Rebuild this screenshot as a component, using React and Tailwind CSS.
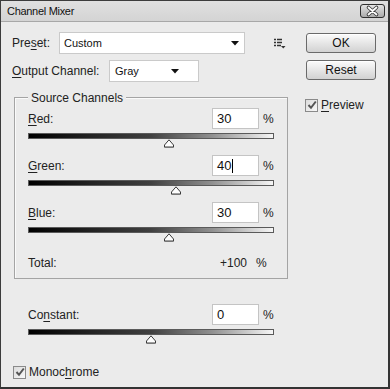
import React from "react"

const font = { fontFamily: '"Liberation Sans", Arial, sans-serif' }

// slider range is -200..200
const toPct = (v) => ((v + 200) / 400) * 100

function U({ children }) {
  return <span className="underline underline-offset-2 decoration-1">{children}</span>
}

function DropArrow() {
  return (
    <svg width="8" height="5" viewBox="0 0 8 5">
      <path d="M0 0 H8 L4 4.5 Z" fill="#111" />
    </svg>
  )
}

function Thumb() {
  return (
    <svg width="11" height="9" viewBox="0 0 11 9">
      <path d="M5.5 0.8 L10 6 V8.2 H1 V6 Z" fill="#fdfdfd" stroke="#3a3a3a" strokeWidth="1" />
      <path d="M1.5 7.6 H9.5" stroke="#9a9a9a" strokeWidth="1" />
    </svg>
  )
}

function CheckBox() {
  return (
    <div className="flex h-[13px] w-[13px] items-center justify-center border border-[#8a8a8a] bg-gradient-to-br from-[#dcdcdc] to-[#f8f8f8]">
      <svg width="10" height="10" viewBox="0 0 10 10">
        <path d="M1.5 5 L4 7.8 L8.8 1.5" fill="none" stroke="#555" strokeWidth="2" />
      </svg>
    </div>
  )
}

function ChannelRow({ label, value, caret }) {
  return (
    <div className="w-[246px]">
      <div className="flex h-[21px] items-center">
        <div className="w-[184px] text-[12px] text-[#222]">{label}</div>
        <div className="flex h-[21px] w-[47px] items-center border border-[#c4c4c4] bg-white pl-[4px] text-[13px] text-[#111]">
          {value}
          {caret && <span className="ml-[1px] h-[14px] w-px bg-black" />}
        </div>
        <div className="ml-[4px] text-[12px] text-[#222]">%</div>
      </div>
      <div className="mt-[4px] h-[6px] w-[246px] border border-[#5a5a5a] bg-[linear-gradient(to_right,#000_0%,#222_25%,#404040_50%,#909090_75%,#f6f6f6_100%)]" />
      <div className="relative h-[8px]">
        <div className="absolute top-0 -translate-x-1/2" style={{ left: `${toPct(value)}%` }}>
          <Thumb />
        </div>
      </div>
    </div>
  )
}

function Button({ children }) {
  return (
    <button className="flex h-[20px] w-[70px] items-center justify-center rounded-[3px] border border-[#6a6a6a] bg-gradient-to-b from-[#fbfbfb] to-[#d2d2d2] text-[12px] text-[#111] shadow-[inset_0_1px_0_#ffffff]">
      {children}
    </button>
  )
}

export default function App() {
  return (
    <div
      style={font}
      className="flex h-[389px] w-[390px] flex-col border-t border-l border-r-2 border-b-2 border-t-[#3c3c3c] border-l-[#3c3c3c] border-r-[#333] border-b-[#333] bg-[#ebebeb]"
    >
      {/* title bar */}
      <div className="flex h-[21px] shrink-0 items-center justify-between border-b border-[#a8a8a8] bg-gradient-to-b from-[#e0e0e0] to-[#d4d4d4] pl-[6px] pr-[3px]">
        <span className="text-[11px] tracking-[-0.3px] text-[#111]">Channel Mixer</span>
        <svg width="25" height="14" viewBox="0 0 25 14">
          <defs>
            <linearGradient id="cb" x1="0" y1="0" x2="0" y2="1">
              <stop offset="0" stopColor="#e6e6e6" />
              <stop offset="1" stopColor="#a9a9a9" />
            </linearGradient>
          </defs>
          <rect x="0.5" y="0.5" width="24" height="13" rx="2.5" fill="url(#cb)" stroke="#2f2f2f" />
          <path d="M8.5 3.5 L16.5 10.5 M16.5 3.5 L8.5 10.5" stroke="#3a3a3a" strokeWidth="3.6" strokeLinecap="round" />
          <path d="M8.5 3.5 L16.5 10.5 M16.5 3.5 L8.5 10.5" stroke="#fff" strokeWidth="1.8" strokeLinecap="round" />
        </svg>
      </div>

      <div className="flex flex-1">
        {/* left side */}
        <div className="w-[305px] pl-[11px] pt-[10px]">
          <div className="flex h-[22px] items-center">
            <div className="w-[47px] text-[12px] text-[#222]">
              Pre<U>s</U>et:
            </div>
            <div className="flex h-[22px] w-[186px] items-center justify-between border border-[#cacaca] bg-white pl-[4px] pr-[5px] text-[11px] text-[#111]">
              <span>Custom</span>
              <DropArrow />
            </div>
            <svg className="ml-[29px]" width="12" height="11" viewBox="0 0 12 11">
              <path d="M0 1.5 H2 M3 1.5 H8 M0 4.5 H2 M3 4.5 H8 M0 7.5 H2 M3 7.5 H7" stroke="#333" strokeWidth="1.4" />
              <path d="M7 8 H11.5 L9.25 10.5 Z" fill="#333" />
            </svg>
          </div>

          <div className="mt-[6px] flex h-[22px] items-center">
            <div className="w-[97px] text-[12px] text-[#222]">
              <U>O</U>utput Channel:
            </div>
            <div className="flex h-[22px] w-[90px] items-center justify-between border border-[#cacaca] bg-white pl-[5px] pr-[19px] text-[11px] text-[#111]">
              <span>Gray</span>
              <DropArrow />
            </div>
          </div>

          {/* source channels group */}
          <div className="relative ml-[2px] mt-[15px] h-[182px] w-[274px] border border-[#a4a4a4] pl-[13px] pt-[10px] shadow-[inset_1px_1px_0_#fafafa]">
            <span className="absolute -top-[9px] left-[13px] bg-[#ebebeb] px-[3px] text-[12px] text-[#222]">
              Source Channels
            </span>
            <div className="flex flex-col gap-[8px]">
              <ChannelRow label={<><U>R</U>ed:</>} value={30} />
              <ChannelRow label={<><U>G</U>reen:</>} value={40} caret />
              <ChannelRow label={<><U>B</U>lue:</>} value={30} />
            </div>
            <div className="mt-[15px] flex h-[14px] w-[246px] items-center text-[12px] text-[#222]">
              <span className="w-[192px]">Total:</span>
              <span>+100</span>
              <span className="ml-[9px]">%</span>
            </div>
          </div>

          <div className="ml-[16px] mt-[25px]">
            <ChannelRow label={<>Co<U>n</U>stant:</>} value={0} />
          </div>

          <div className="ml-[1px] mt-[20px] flex items-center gap-[3px] text-[12px] text-[#222]">
            <CheckBox />
            <span>
              Monoc<U>h</U>rome
            </span>
          </div>
        </div>

        {/* right side */}
        <div className="flex flex-col pt-[11px]">
          <Button>OK</Button>
          <div className="mt-[7px]">
            <Button>Reset</Button>
          </div>
          <div className="mt-[16px] -ml-[1px] flex items-center gap-[3px] text-[12px] text-[#222]">
            <CheckBox />
            <span>
              <U>P</U>review
            </span>
          </div>
        </div>
      </div>
    </div>
  )
}
